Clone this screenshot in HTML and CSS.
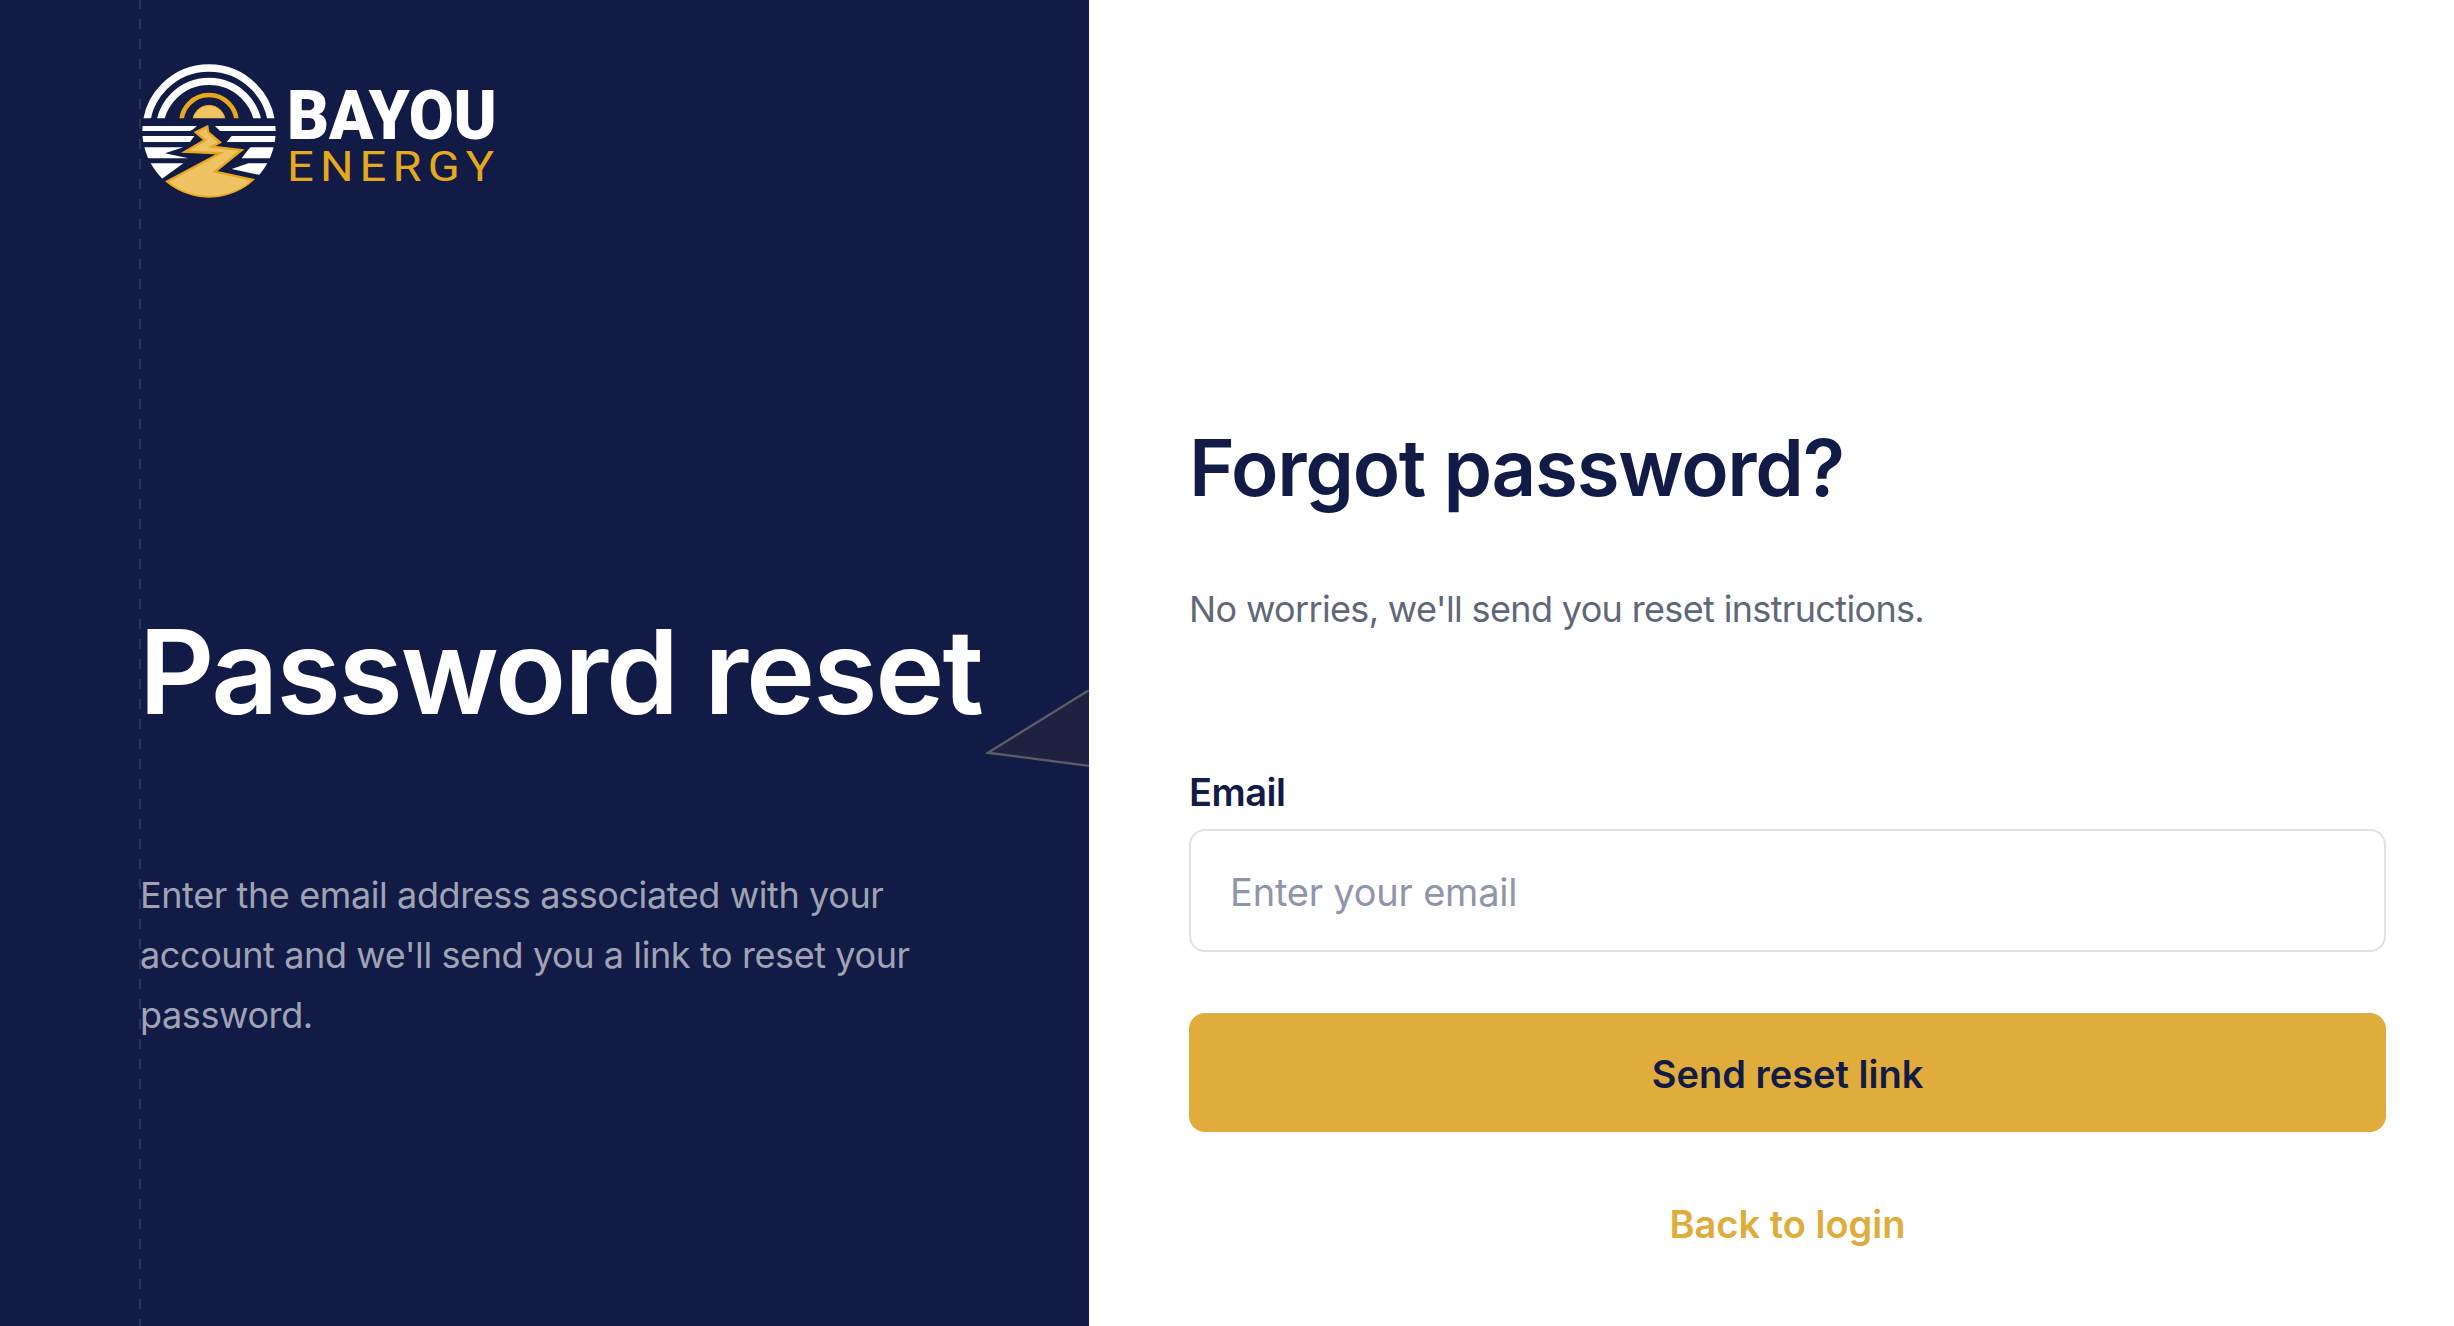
FILE: index.html
```html
<!DOCTYPE html>
<html lang="en">
<head>
  <meta charset="UTF-8" />
  <meta name="viewport" content="width=device-width, initial-scale=1.0" />
  <title>Forgot password</title>
  <link rel="stylesheet" href="styles.css">
</head>
<body>
  <div class="reset-page">
    <div class="brand-panel">
      <div class="dash-line"></div>
      <svg class="corner-shape" viewBox="0 0 104 80" aria-hidden="true">
        <polygon points="2,63 110,-4 110,77" fill="#1e2240" stroke="#5c5c66" stroke-width="2.4"/>
      </svg>

      <div class="logo">
        <svg class="logo-mark" viewBox="15 15 420 420" aria-hidden="true">
          <defs>
            <clipPath id="skyClip"><rect x="0" y="0" width="450" height="190"/></clipPath>
            <clipPath id="discClip"><circle cx="222" cy="228" r="200"/></clipPath>
          </defs>
          <g clip-path="url(#skyClip)" fill="none">
            <circle cx="222" cy="228" r="189" stroke="#fff" stroke-width="22"/>
            <circle cx="222" cy="228" r="149" stroke="#fff" stroke-width="22"/>
            <circle cx="222" cy="203" r="83" stroke="#e6a91e" stroke-width="14"/>
            <circle cx="222" cy="200" r="49" fill="#efc263" stroke="#e6a91e" stroke-width="3"/>
          </g>
          <g clip-path="url(#discClip)" fill="#fff">
            <polygon points="20,213 185,213 170,228 20,228"/>
            <polygon points="240,213 425,213 425,228 255,228"/>
            <polygon points="20,243 178,243 165,261 20,261"/>
            <polygon points="290,243 425,243 425,261 275,261"/>
            <polygon points="20,277 145,277 90,295 160,310 20,310"/>
            <polygon points="345,277 425,277 425,310 320,310"/>
            <polygon points="20,325 145,325 80,372 20,372"/>
            <polygon points="340,325 425,325 425,372 375,360 290,342"/>
          </g>
          <path d="M217 215 L182 232 L210 255 L150 290 L255 295 L95 380 A200 200 0 0 0 355 375 L240 350 L320 285 L230 275 L255 262 L220 232 Z" fill="#121b45" stroke="#121b45" stroke-width="22" clip-path="url(#discClip)"/>
          <path d="M217 215 L182 232 L210 255 L150 290 L255 295 L95 380 A200 200 0 0 0 355 375 L240 350 L320 285 L230 275 L255 262 L220 232 Z" fill="#efc263" stroke="#e6a91e" stroke-width="7" clip-path="url(#discClip)"/>
        </svg>
        <div class="logo-word">
          <span class="logo-top">BAYOU</span>
          <span class="logo-bottom">ENERGY</span>
        </div>
      </div>

      <h1 class="brand-title">Password reset</h1>
      <p class="brand-text">Enter the email address associated with your account and we'll send you a link to reset your password.</p>
    </div>

    <div class="form-panel">
      <h2 class="form-title">Forgot password?</h2>
      <p class="form-sub">No worries, we'll send you reset instructions.</p>
      <label class="field-label" for="email">Email</label>
      <input class="field-input" type="email" id="email" placeholder="Enter your email">
      <button class="send-btn" type="button">Send reset link</button>
      <a class="back-link" href="#">Back to login</a>
    </div>
  </div>
</body>
</html>
```

FILE: styles.css
```css
* {
  box-sizing: border-box;
  margin: 0;
  padding: 0;
  font-family: Inter, "Noto Sans", sans-serif;
}

body {
  height: 100vh;
  overflow: hidden;
  background: #fff;
  -webkit-font-smoothing: antialiased;
}

.reset-page {
  display: flex;
  height: 1326px;
}

.brand-panel {
  position: relative;
  width: 1089px;
  padding: 60px 0 0 140px;
  background: #121b45;
  overflow: hidden;
}

.dash-line {
  position: absolute;
  left: 139px;
  top: 0;
  bottom: 0;
  width: 2px;
  background: repeating-linear-gradient(to bottom, #2c3556 0, #2c3556 9px, transparent 9px, transparent 19px, #2c3556 19px, #2c3556 20px);
}

.corner-shape {
  position: absolute;
  left: 986px;
  top: 690px;
  width: 103px;
  height: 80px;
}

.logo {
  position: relative;
  display: flex;
  height: 140px;
}

.logo-mark {
  width: 140px;
  height: 140px;
}

.logo-word {
  display: flex;
  flex-direction: column;
  align-items: flex-start;
  margin: 31px 0 0 7px;
}

.logo-top {
  font-family: Roboto, sans-serif;
  font-weight: 900;
  font-size: 68px;
  line-height: 50px;
  color: #fff;
  transform: scaleX(0.958);
  transform-origin: left center;
}

.logo-bottom {
  margin-top: 11px;
  font-family: Roboto, sans-serif;
  font-weight: 400;
  font-size: 42px;
  line-height: 30px;
  letter-spacing: 5.5px;
  color: #e6a91e;
  transform: scaleX(1.12);
  transform-origin: left center;
}

.brand-title {
  position: relative;
  margin: 402px 0 0 -1px;
  font-size: 117px;
  line-height: 140px;
  font-weight: 600;
  letter-spacing: -2.1px;
  color: #fff;
}

.brand-text {
  position: relative;
  width: 800px;
  margin-top: 123px;
  font-size: 36px;
  line-height: 60px;
  letter-spacing: -0.4px;
  color: #a0a3b5;
}

.form-panel {
  flex: 1;
  display: flex;
  flex-direction: column;
  padding: 420px 68px 0 100px;
}

.form-title {
  font-size: 78px;
  line-height: 96px;
  font-weight: 600;
  letter-spacing: -1.3px;
  color: #121b45;
}

.form-sub {
  margin-top: 68px;
  font-size: 36px;
  line-height: 50px;
  letter-spacing: -0.65px;
  color: #5f6878;
}

.field-label {
  margin-top: 133px;
  font-size: 38px;
  line-height: 50px;
  font-weight: 600;
  letter-spacing: -0.5px;
  color: #121b45;
}

.field-input {
  height: 123px;
  margin-top: 12px;
  padding: 2px 39px 0;
  border: 2px solid #dde1e6;
  border-radius: 16px;
  background: #fff;
  font-size: 38px;
  letter-spacing: -0.2px;
  color: #121b45;
  outline: none;
}

.field-input::placeholder {
  color: #9095aa;
  opacity: 1;
}

.send-btn {
  height: 119px;
  margin-top: 61px;
  padding-top: 2px;
  border: none;
  border-radius: 16px;
  background: #e0ac3b;
  font-size: 38px;
  font-weight: 600;
  color: #121b45;
  cursor: pointer;
}

.back-link {
  align-self: center;
  margin-top: 67px;
  font-size: 38px;
  line-height: 50px;
  font-weight: 600;
  color: #e0ac3b;
  text-decoration: none;
}
```
